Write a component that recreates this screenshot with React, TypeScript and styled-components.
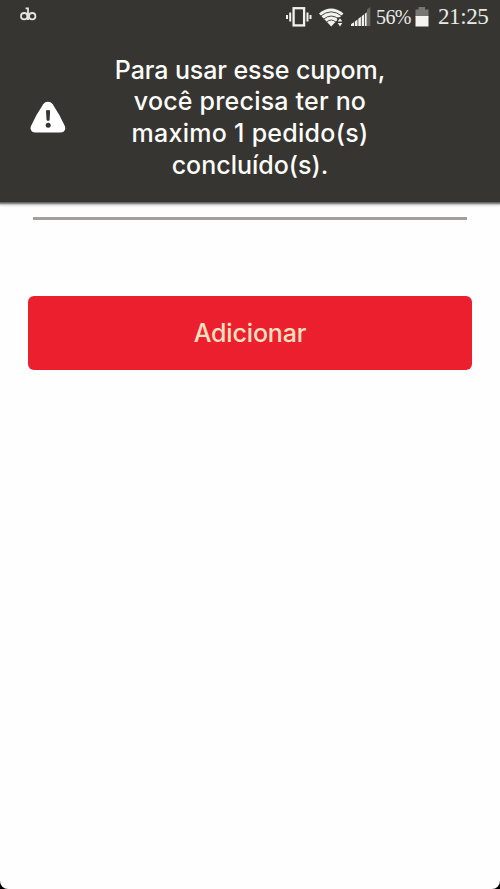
import React from "react";
import styled, { createGlobalStyle } from "styled-components";

const GlobalStyle = createGlobalStyle`
  * { box-sizing: border-box; }
  body { margin: 0; background: #000; }
`;

const Screen = styled.div`
  width: 500px;
  height: 889px;
  display: flex;
  flex-direction: column;
  background: #fefefe;
  border-radius: 0 0 8px 8px;
  overflow: hidden;
`;

const Header = styled.header`
  flex: none;
  height: 202px;
  background: #363532;
  box-shadow: 0 1px 0 #666663, 0 2px 0 #8c8c88, 0 3px 1px #c4c4c2, 0 4px 2px #e4e4e2;
`;

const StatusBar = styled.div`
  height: 34px;
  padding: 0 11px 0 20px;
  display: flex;
  align-items: center;
  color: #e9e9e6;
  font-family: "Liberation Serif", serif;
`;

const Icon = styled.svg<{ $gap?: number; $lift?: number }>`
  display: block;
  flex: none;
  margin-right: ${(p) => p.$gap ?? 0}px;
  margin-bottom: ${(p) => p.$lift ?? 0}px;
`;

const StatusSpacer = styled.div`
  flex: 1;
`;

const Battery = styled.span`
  width: 35px;
  margin-right: 4px;
  font-size: 20px;
  letter-spacing: -0.6px;
  white-space: nowrap;
`;

const Clock = styled.span`
  width: 51px;
  font-size: 23px;
  letter-spacing: -0.4px;
  white-space: nowrap;
`;

const Notice = styled.div`
  height: 168px;
  padding-left: 30px;
  display: flex;
  align-items: center;
`;

const Message = styled.div`
  width: 368px;
`;

const Line = styled.div<{ $spacing: number }>`
  font: 500 25px/31.7px Inter, sans-serif;
  letter-spacing: ${(p) => p.$spacing}px;
  color: #fcfcf9;
  text-align: center;
  white-space: nowrap;
`;

const Content = styled.main`
  padding: 15px 28px 0;
`;

const FieldUnderline = styled.div`
  height: 3px;
  margin: 0 5px 76px;
  background: #a09f99;
`;

const AddButton = styled.button`
  display: block;
  width: 444px;
  height: 74px;
  padding: 0;
  border: 0;
  border-radius: 6px;
  background: #eb1f2d;
  color: #fce0c0;
  font: 500 25px/75px Inter, sans-serif;
  letter-spacing: -0.15px;
`;

const lines = [
  { text: "Para usar esse cupom,", spacing: -0.1 },
  { text: "você precisa ter no", spacing: 0.2 },
  { text: "maximo 1 pedido(s)", spacing: 0.27 },
  { text: "concluído(s).", spacing: 0 },
];

function AppGlyph() {
  return (
    <Icon $lift={5} width="17" height="15" viewBox="0 0 17 15" fill="none" stroke="#e4e4df" strokeWidth="1.8">
      <circle cx="4.2" cy="9.2" r="3.2" />
      <circle cx="12.2" cy="9.2" r="3.2" />
      <path d="M5.6 1.4H8v11.7" />
    </Icon>
  );
}

function VibrateIcon() {
  return (
    <Icon $gap={7} $lift={1} width="26" height="20" viewBox="0 0 26 20" fill="none" stroke="#f1f1ed">
      <rect x="7.6" y="1.2" width="10.5" height="17.2" strokeWidth="2.3" />
      <path d="M1 8v4M4.2 5.5v9M21.5 5.5v9M24.5 8v4" strokeWidth="2" />
    </Icon>
  );
}

function WifiIcon() {
  return (
    <Icon $gap={7} width="25" height="19" viewBox="0 0 25 19">
      <path d="M0 5.4Q12 -4.4 24.5 5.4L12.2 18.6Z" fill="#f1f1ed" />
      <path d="M1.5 8.2Q12.2-.5 23 8.2M4.5 11.2Q12.2 4.9 20 11.2M7.4 14.1Q12.2 10 17 14.1" fill="none" stroke="#363532" strokeWidth=".9" />
      <path d="M18.3 9.3h7v10h-7z" fill="#363532" />
      <path d="M18.7 13.6 21 10.2 23.3 13.6ZM18.7 15 21 18.6 23.3 15Z" fill="#f1f1ed" />
    </Icon>
  );
}

function SignalIcon() {
  return (
    <Icon $gap={5} width="20" height="20" viewBox="0 0 20 20" fill="#f1f1ed">
      <path d="M0 19V17.2L3.1 14.9V19zM3.9 19v-4.6l2.6-2V19zM7.3 19v-7.2l2.6-2V19zM10.7 19V9.2l2.4-1.9V19zM13.9 19V6.7l1.8-1.4V19z" />
      <path d="M16 2.4 19.3 0v19H16z" fill="#686763" />
    </Icon>
  );
}

function BatteryIcon() {
  return (
    <Icon $gap={9} width="14" height="20" viewBox="0 0 14 20">
      <path d="M.5 2.5h3V0h6.5v2.5h3.5V10H.5z" fill="#777672" />
      <path d="M.5 9h13v10.5H.5z" fill="#f4f4f1" />
    </Icon>
  );
}

function WarningIcon() {
  return (
    <Icon $lift={2} width="36" height="33" viewBox="0 0 36 33">
      <path d="M13.2 3.2C15.5-.1 20.4-.1 22.7 3.2Q30 14 34.8 25.1C36.2 28.6 34 31.6 30.2 31.6H5.6C1.8 31.6-.4 28.6 1 25.1Q5.8 14 13.2 3.2Z" fill="#fff" />
      <path d="M16 9.6Q18 8.2 20.1 9.6L19.6 19.2Q18 20.5 16.6 19.2Z" fill="#363532" />
      <circle cx="18.2" cy="24.2" r="2.5" fill="#363532" />
    </Icon>
  );
}

export default function App() {
  return (
    <>
      <GlobalStyle />
      <Screen>
        <Header>
          <StatusBar>
            <AppGlyph />
            <StatusSpacer />
            <VibrateIcon />
            <WifiIcon />
            <SignalIcon />
            <Battery>56%</Battery>
            <BatteryIcon />
            <Clock>21:25</Clock>
          </StatusBar>
          <Notice>
            <WarningIcon />
            <Message>
              {lines.map((line) => (
                <Line key={line.text} $spacing={line.spacing}>
                  {line.text}
                </Line>
              ))}
            </Message>
          </Notice>
        </Header>
        <Content>
          <FieldUnderline />
          <AddButton type="button">Adicionar</AddButton>
        </Content>
      </Screen>
    </>
  );
}
